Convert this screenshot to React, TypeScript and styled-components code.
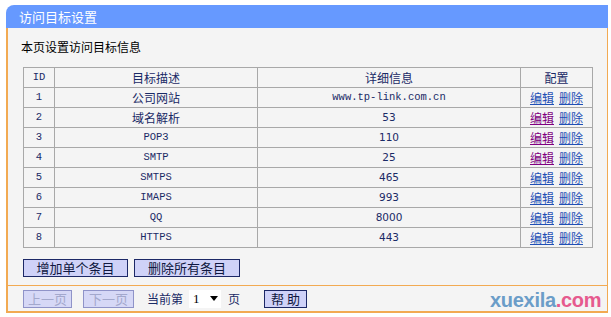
import styled, { createGlobalStyle } from 'styled-components'

const GlobalStyle = createGlobalStyle`
  html, body {
    margin: 0;
    padding: 0;
    background: #ffffff;
  }
  body {
    font-family: "Noto Sans CJK SC", "DejaVu Sans", sans-serif;
    font-size: 12px;
  }
`

const Page = styled.div`
  position: relative;
  padding: 5px 0 0 6px;
  width: 602px;
`

const Header = styled.div`
  height: 23px;
  line-height: 23px;
  background: #6699ff;
  border-top-left-radius: 8px;
  color: #ffffff;
  font-size: 13px;
  padding-left: 13px;
`

const Panel = styled.div`
  background: #f4f4f4;
  border-left: 2px solid #f2aa52;
  border-right: 1px solid #f2aa52;
  border-bottom: 2px solid #f2aa52;
`

const Content = styled.div`
  padding: 12px 0 8px 13px;
`

const Intro = styled.div`
  line-height: 14px;
  height: 14px;
  color: #000000;
  font-size: 12px;
`

const Table = styled.table`
  margin: 13px 0 0 2px;
  border-collapse: collapse;
  width: 569px;
  table-layout: fixed;
  border: 1px solid #9a9a9a;
`

const Cell = styled.td<{ $mono?: boolean; $num?: boolean }>`
  height: 19px;
  padding: 0;
  border: 1px solid #a8a8a8;
  text-align: center;
  color: #1a2a66;
  font-size: ${p => (p.$mono || p.$num ? '10.5px' : '12px')};
  font-family: ${p =>
    p.$mono
      ? '"Liberation Mono", "Noto Sans CJK SC", monospace'
      : p.$num
        ? '"DejaVu Sans", sans-serif'
        : '"Noto Sans CJK SC", sans-serif'};
  line-height: 19px;
  white-space: nowrap;
`

const HeadCell = styled(Cell).attrs({ as: 'th' })`
  font-weight: normal;
`

const Link = styled.a<{ $visited?: boolean }>`
  color: ${p => (p.$visited ? '#800080' : '#1f4fb4')};
  text-decoration: underline;
  cursor: pointer;
  font-size: 12px;
  & + & {
    margin-left: 5px;
  }
`

const ButtonRow = styled.div`
  display: flex;
  gap: 6px;
  margin: 11px 0 0 2px;
`

const Button = styled.button<{ $w: number; $disabled?: boolean }>`
  box-sizing: border-box;
  width: ${p => p.$w}px;
  height: 18px;
  padding: 0;
  background: ${p => (p.$disabled ? '#d6d8f6' : '#cfd2f8')};
  border: 1px solid ${p => (p.$disabled ? '#8f93c8' : '#1c2866')};
  color: ${p => (p.$disabled ? '#a3a8cc' : '#101840')};
  font-family: "Noto Sans CJK SC", sans-serif;
  font-size: 13px;
  line-height: 16px;
  cursor: pointer;
`

const Footer = styled.div`
  display: flex;
  align-items: center;
  height: 25px;
  padding-left: 15px;
  border-top: 1px solid #f2aa52;
  color: #1a2a66;
  font-size: 12px;
`

const Gap = styled.span<{ $w: number }>`
  display: inline-block;
  width: ${p => p.$w}px;
`

const Select = styled.div`
  box-sizing: border-box;
  display: flex;
  align-items: center;
  justify-content: space-between;
  width: 32px;
  height: 18px;
  padding: 0 2px 0 4px;
  background: #ffffff;
  color: #000000;
  font-family: "Liberation Serif", serif;
  font-size: 13px;
`

const Arrow = styled.span`
  width: 0;
  height: 0;
  border-left: 4px solid transparent;
  border-right: 4px solid transparent;
  border-top: 5px solid #000000;
  margin-right: 1px;
`

const Watermark = styled.div`
  position: absolute;
  left: 490px;
  top: 288px;
  font-family: "Liberation Sans", Arial, sans-serif;
  font-weight: bold;
  font-size: 20px;
  line-height: 24px;
  color: #6b9dc8;
  letter-spacing: -0.3px;
  span {
    color: #e65a8e;
  }
`

const rows = [
  { id: 1, name: '公司网站', info: 'www.tp-link.com.cn', infoMono: true, visited: false },
  { id: 2, name: '域名解析', info: '53', visited: true },
  { id: 3, name: 'POP3', info: '110', visited: true },
  { id: 4, name: 'SMTP', info: '25', visited: true },
  { id: 5, name: 'SMTPS', info: '465', visited: false },
  { id: 6, name: 'IMAPS', info: '993', visited: false },
  { id: 7, name: 'QQ', info: '8000', visited: false },
  { id: 8, name: 'HTTPS', info: '443', visited: false },
]

const isAscii = (s: string) => /^[\x00-\x7f]+$/.test(s)

export default function App() {
  return (
    <>
      <GlobalStyle />
      <Page>
        <Header>访问目标设置</Header>
        <Panel>
          <Content>
            <Intro>本页设置访问目标信息</Intro>
            <Table>
              <colgroup>
                <col style={{ width: 31 }} />
                <col style={{ width: 203 }} />
                <col style={{ width: 263 }} />
                <col style={{ width: 72 }} />
              </colgroup>
              <thead>
                <tr>
                  <HeadCell $mono>ID</HeadCell>
                  <HeadCell>目标描述</HeadCell>
                  <HeadCell>详细信息</HeadCell>
                  <HeadCell>配置</HeadCell>
                </tr>
              </thead>
              <tbody>
                {rows.map(r => (
                  <tr key={r.id}>
                    <Cell $mono>{r.id}</Cell>
                    <Cell $mono={isAscii(r.name)}>{r.name}</Cell>
                    <Cell $mono={r.infoMono} $num={!r.infoMono}>{r.info}</Cell>
                    <Cell>
                      <Link $visited={r.visited}>编辑</Link>
                      <Link>删除</Link>
                    </Cell>
                  </tr>
                ))}
              </tbody>
            </Table>
            <ButtonRow>
              <Button $w={105}>增加单个条目</Button>
              <Button $w={106}>删除所有条目</Button>
            </ButtonRow>
          </Content>
          <Footer>
            <Button $w={49} $disabled>上一页</Button>
            <Gap $w={11} />
            <Button $w={51} $disabled>下一页</Button>
            <Gap $w={13} />
            <span>当前第</span>
            <Gap $w={6} />
            <Select>
              <span>1</span>
              <Arrow />
            </Select>
            <Gap $w={7} />
            <span>页</span>
            <Gap $w={24} />
            <Button $w={43}>帮 助</Button>
          </Footer>
        </Panel>
        <Watermark>
          xuexila<span>.com</span>
        </Watermark>
      </Page>
    </>
  )
}
